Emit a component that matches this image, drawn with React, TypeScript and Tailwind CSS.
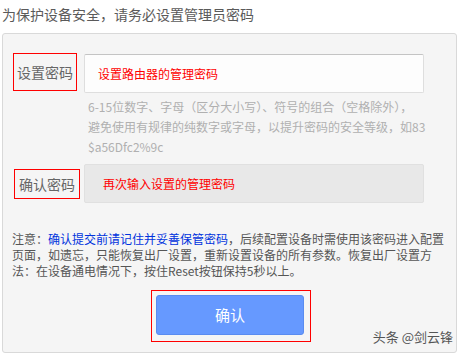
import React from "react";

const font = { fontFamily: '"Noto Sans CJK SC", "Liberation Sans", sans-serif' };

export default function App() {
  return (
    <div className="relative h-[356px] w-[460px] overflow-hidden bg-white px-[2px]" style={font}>
      {/* heading */}
      <p className="whitespace-nowrap pt-[6px] text-[14px] leading-[16px] text-[#5a5a5a]">
        为保护设备安全，请务必设置管理员密码
      </p>

      {/* panel */}
      <div className="relative mt-[11px] h-[320px] w-[455px] rounded-[3px] border border-[#d9d9d9] bg-[#f5f5f5] pl-[9px] pt-[19px]">
        {/* set password */}
        <div className="flex items-start">
          <div className="ml-[1px] flex h-[38px] w-[64px] items-center justify-center border border-[#ff0000] text-[14px] text-[#666]">
            设置密码
          </div>
          <div className="ml-[7px] flex flex-col">
            <div className="mt-[1px] flex h-[39px] w-[340px] items-center rounded-[2px] border border-[#dedede] border-t-[#c4c4c4] bg-[#fdfdfd] pl-[13px] text-[12px] text-[#ff0000]">
              设置路由器的管理密码
            </div>
            <div className="mt-[4px] pl-[4px] text-[12px] leading-[20px] text-[#b0b0b0]">
              <p className="whitespace-nowrap">6-15位数字、字母（区分大小写）、符号的组合（空格除外），</p>
              <p className="whitespace-nowrap">避免使用有规律的纯数字或字母，以提升密码的安全等级，如83</p>
              <p className="whitespace-nowrap">$a56Dfc2%9c</p>
            </div>
          </div>
        </div>

        {/* confirm password */}
        <div className="mt-[7px] flex items-start">
          <div className="ml-[2px] mt-[5px] flex h-[30px] w-[66px] items-center justify-center border border-[#ff0000] text-[14px] text-[#666]">
            确认密码
          </div>
          <div className="ml-[4px] flex h-[39px] w-[340px] items-center rounded-[2px] border border-[#e0e0e0] bg-[#e8e8e8] pl-[18px] text-[12px] text-[#ff0000]">
            再次输入设置的管理密码
          </div>
        </div>

        {/* note */}
        <div className="mt-[28px] text-[12px] leading-[16px] text-[#555]">
          <p className="whitespace-nowrap">
            注意：<span className="text-[#0033dd]">确认提交前请记住并妥善保管密码</span>，后续配置设备时需使用该密码进入配置
          </p>
          <p className="whitespace-nowrap">页面，如遗忘，只能恢复出厂设置，重新设置设备的所有参数。恢复出厂设置方</p>
          <p className="whitespace-nowrap">法：在设备通电情况下，按住Reset按钮保持5秒以上。</p>
        </div>

        {/* submit */}
        <div className="ml-[139px] mt-[11px] w-[160px] border border-[#ff0000] pb-[6px] pl-[4px] pr-[6px] pt-[4px]">
          <button
            type="button"
            className="flex h-[40px] w-[148px] items-center justify-center rounded-[3px] border border-[#5a8cf0] bg-[#6699ff] text-[15px] text-white"
          >
            确认
          </button>
        </div>

        <span className="absolute bottom-[7px] right-[3px] whitespace-nowrap text-[13px] leading-[16px] text-[#555]">
          头条 @剑云锋
        </span>
      </div>
    </div>
  );
}
